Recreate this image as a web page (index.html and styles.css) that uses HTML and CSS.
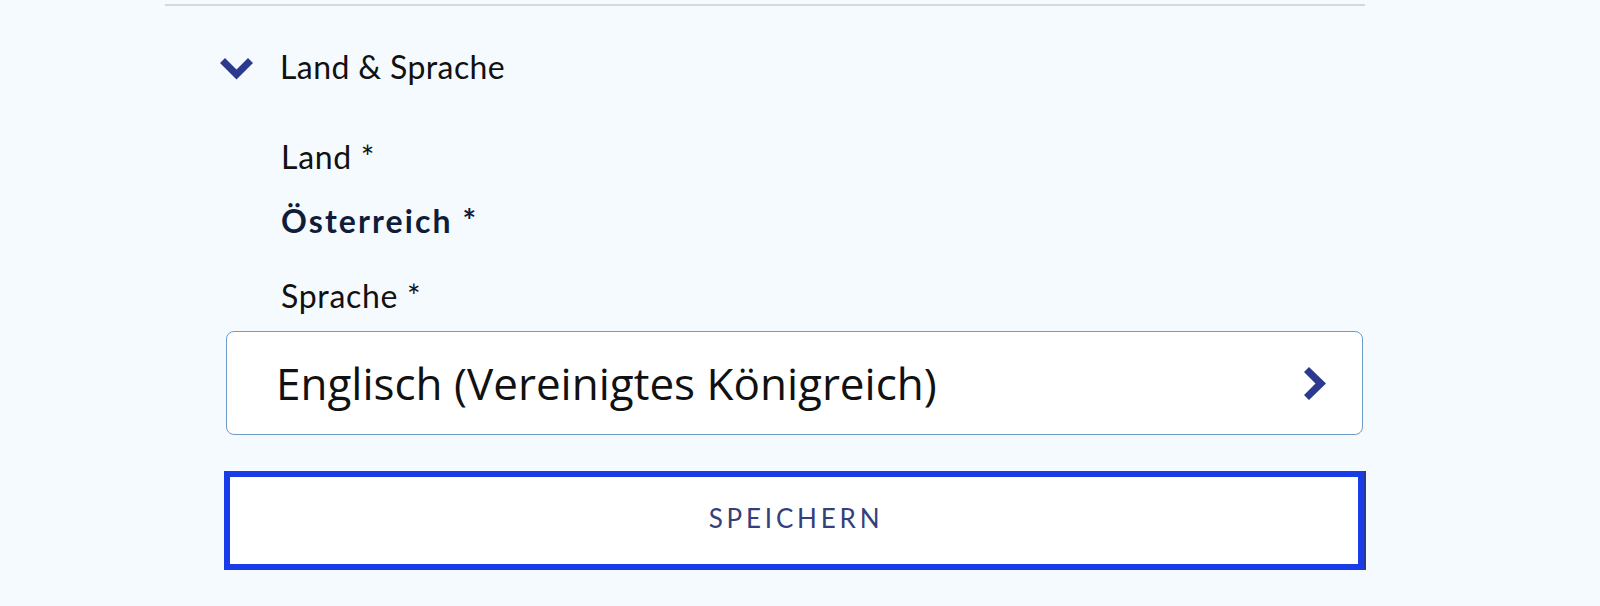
FILE: index.html
```html
<!DOCTYPE html>
<html lang="de">
<head>
<meta charset="utf-8">
<title>Land &amp; Sprache</title>
<link rel="stylesheet" href="styles.css">
</head>
<body>
<div class="page">
  <section class="section">
    <div class="section-head">
      <svg class="chev-down" width="33" height="22" viewBox="0 0 33 22" aria-hidden="true"><path d="M0 5 L5 0 L16.5 11.5 L28 0 L33 5 L16.5 21.5 Z" fill="#2b3a8f"/></svg>
      <span class="section-title">Land &amp; Sprache</span>
    </div>
    <div class="section-body">
      <div class="field-label">Land *</div>
      <div class="field-value">Österreich *</div>
      <div class="field-label label-lang">Sprache *</div>
      <div class="select">
        <span class="select-text">Englisch (Vereinigtes Königreich)</span>
        <svg class="chev-right" width="22" height="33" viewBox="0 0 22 33" aria-hidden="true"><path d="M5 0 L22 16.5 L5 33 L0 28 L11.5 16.5 L0 5 Z" fill="#2b3a8f"/></svg>
      </div>
      <button class="save-btn" type="button">SPEICHERN</button>
    </div>
  </section>
</div>
</body>
</html>
```

FILE: styles.css
```css
html, body {
  margin: 0;
  padding: 0;
  background: #f5faff;
}
body {
  font-family: "Lato", "Noto Sans", sans-serif;
  color: #111;
}
.page {
  padding-top: 4px;
}
.section {
  margin-left: 165px;
  width: 1200px;
  border-top: 2px solid #d3d8de;
}
.section-head {
  display: flex;
  align-items: center;
  gap: 27px;
  padding-left: 55px;
  padding-top: 41px;
}
.chev-down {
  display: block;
  flex: none;
  margin-top: 4px;
}
.section-title {
  font-size: 32px;
  line-height: 40px;
  letter-spacing: 0.4px;
  color: #111;
}
.section-body {
  margin-left: 59px;
  width: 1141px;
  display: flex;
  flex-direction: column;
}
.field-label,
.field-value {
  padding-left: 57px;
  font-size: 32px;
  line-height: 40px;
  letter-spacing: 0.7px;
}
.field-label {
  margin-top: 50px;
}
.field-value {
  margin-top: 24px;
  font-weight: 700;
  letter-spacing: 2.1px;
  color: #0f1c3a;
}
.label-lang {
  margin-top: 35px;
}
.select {
  margin: 15px 2px 0;
  height: 104px;
  box-sizing: border-box;
  border: 1.5px solid #6f9bc8;
  border-radius: 8px;
  background: #fff;
  display: flex;
  align-items: center;
  justify-content: space-between;
  padding: 0 36px 0 49px;
}
.select-text {
  font-family: "Open Sans", "Noto Sans", sans-serif;
  font-size: 44px;
  line-height: 60px;
  color: #111;
}
.chev-right {
  display: block;
  flex: none;
}
.save-btn {
  margin-top: 36px;
  height: 99px;
  width: 1140px;
  box-sizing: border-box;
  border: 6px solid #1a3ce8;
  box-shadow: 2px 0 0 #2a3a8c, 0 1px 0 #2a3a8c;
  background: #fff;
  font-family: "Lato", "Noto Sans", sans-serif;
  font-size: 26px;
  color: #34407b;
  letter-spacing: 3.8px;
  padding: 0 0 6px 4px;
  cursor: pointer;
}
```
